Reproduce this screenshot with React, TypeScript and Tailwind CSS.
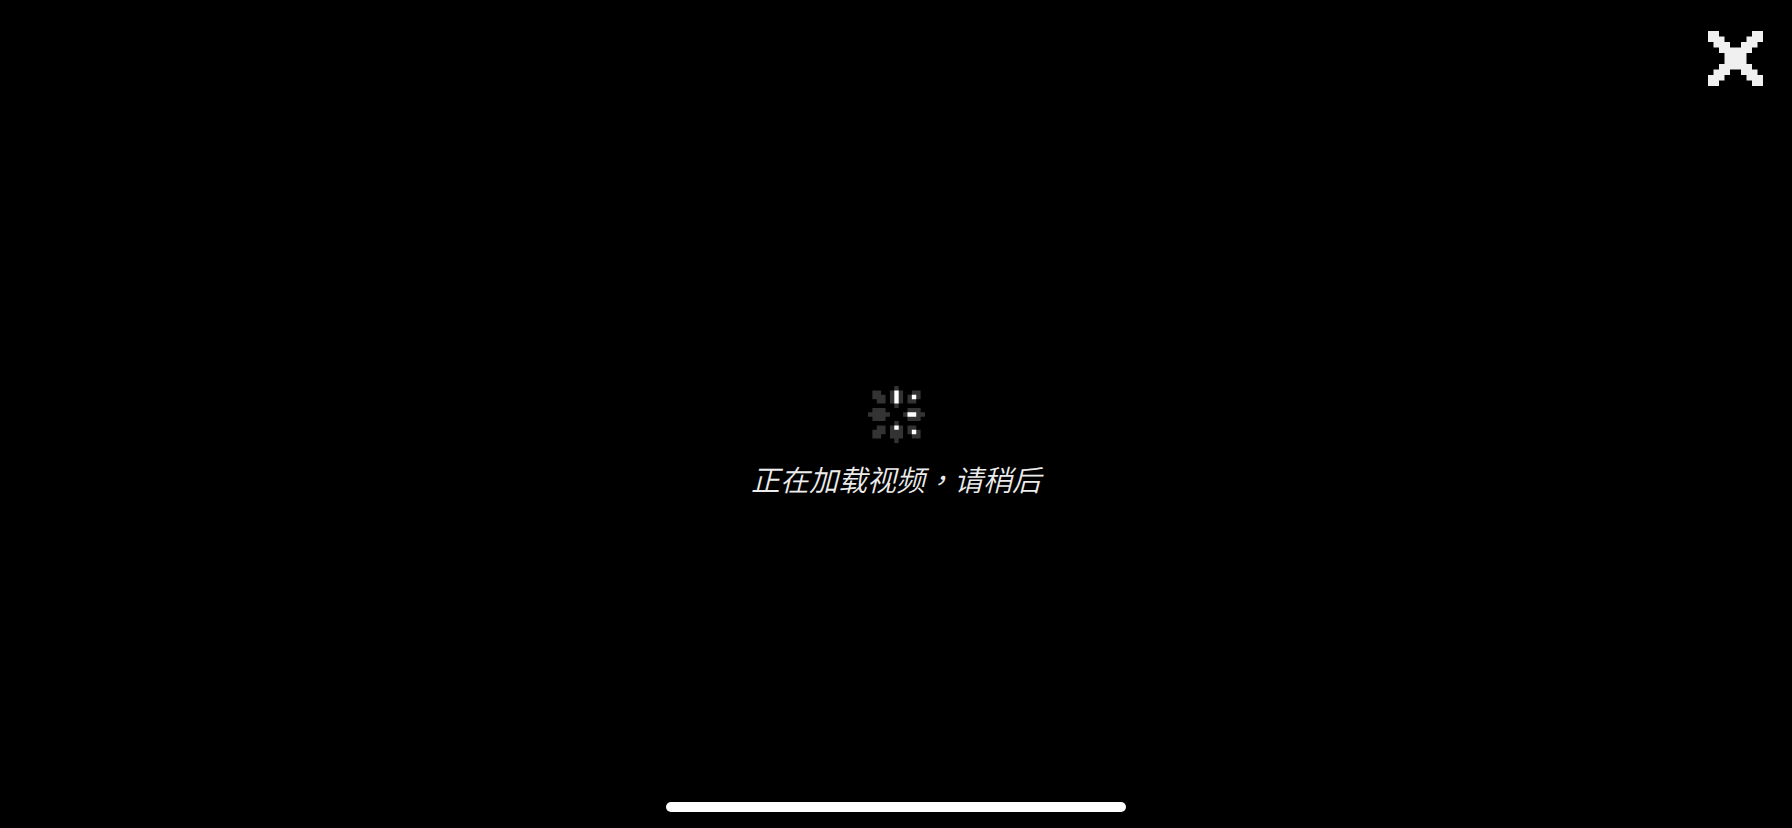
const CLOSE_ROWS = [
  '##......##',
  '###....###',
  '.###..###.',
  '..######..',
  '...####...',
  '...####...',
  '..######..',
  '.###..###.',
  '###....###',
  '##......##',
];

// "#" is an unlit pixel, "o" a lit one.
const SPINNER_ROWS = [
  '......#......',
  '.##..#o#..##.',
  '.###.#o#.#o#.',
  '..##.#o#.##..',
  '......#......',
  '.###.....###.',
  '#####...#oo##',
  '.###.....###.',
  '......#......',
  '..##.#o#.##..',
  '.###.###.#o#.',
  '.##..###..##.',
  '......#......',
];

function PixelArt({ rows, className }: { rows: string[]; className: string }) {
  const draw = (marks: string) =>
    rows
      .flatMap((row, y) =>
        [...row].map((cell, x) => (marks.includes(cell) ? `M${x} ${y}h1v1h-1z` : '')),
      )
      .join('');
  return (
    <svg
      viewBox={`0 0 ${rows[0].length} ${rows.length}`}
      className={className}
      aria-hidden="true"
    >
      <path d={draw('#o')} fill="currentColor" />
      <path d={draw('o')} fill="#ffffff" />
    </svg>
  );
}

export default function App() {
  return (
    <main className="grid min-h-screen grid-rows-[1fr_auto_1fr] bg-black font-['Noto_Sans_CJK_SC',sans-serif]">
      <header className="flex items-start justify-end px-[29px] pt-[31px]">
        <button type="button" aria-label="关闭" className="text-[#f0f0f0]">
          <PixelArt rows={CLOSE_ROWS} className="size-[55px]" />
        </button>
      </header>

      <section role="status" className="flex flex-col items-center gap-[15px] pt-14">
        <PixelArt rows={SPINNER_ROWS} className="size-[57px] text-[#333333]" />
        <p className="text-[29px] leading-10 font-[350] text-[#ececec] italic">
          正在加载视频
          <span className="font-['Noto_Sans_CJK_TC',sans-serif]">{'\uFF0C'}</span>
          请稍后
        </p>
      </section>

      <footer className="flex items-end justify-center pb-4">
        <div className="h-2.5 w-[460px] rounded-full bg-white" />
      </footer>
    </main>
  );
}
